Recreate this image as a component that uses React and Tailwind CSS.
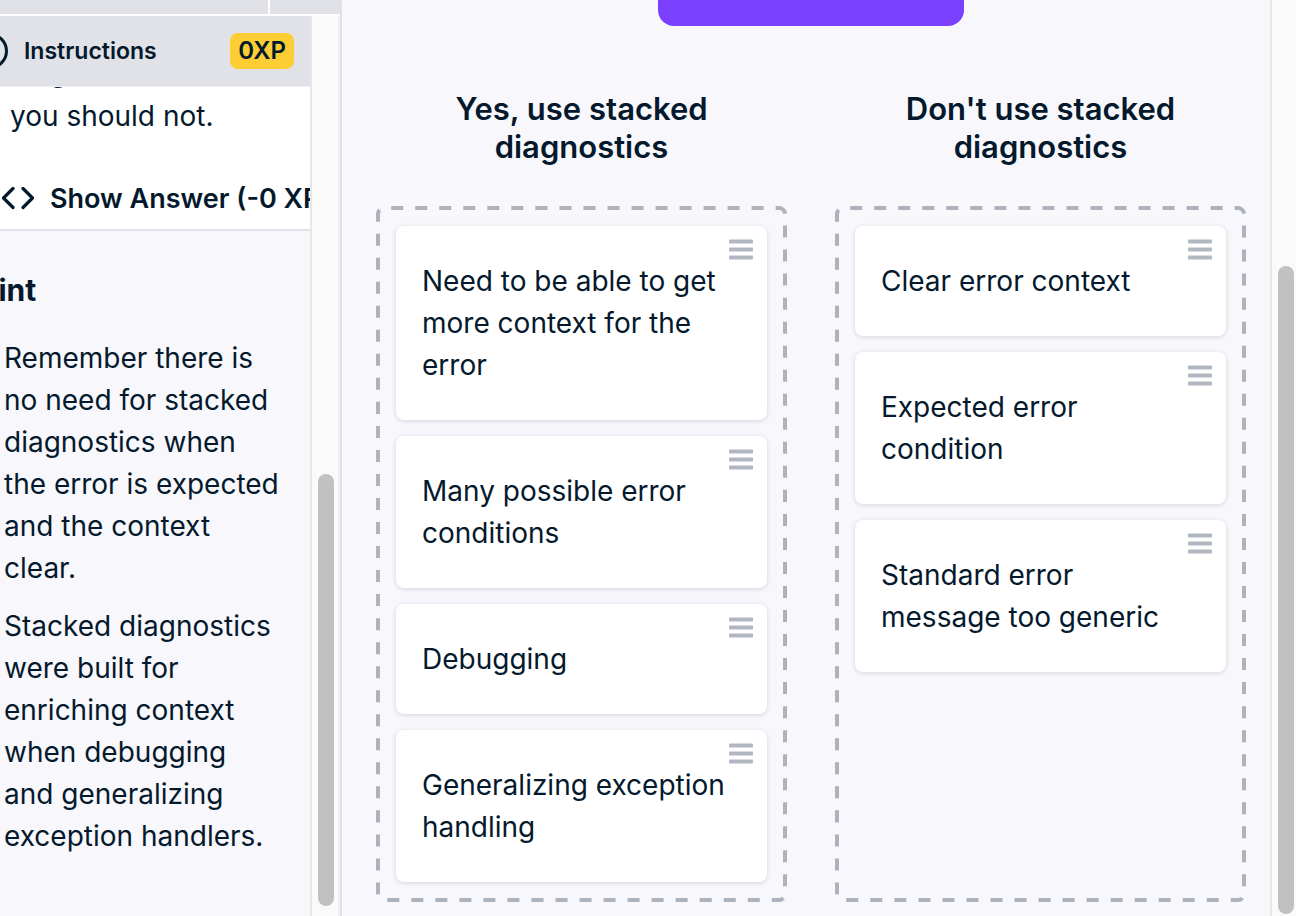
const useCards = [
  'Need to be able to get more context for the error',
  'Many possible error conditions',
  'Debugging',
  'Generalizing exception handling',
];

const avoidCards = [
  'Clear error context',
  'Expected error condition',
  'Standard error message too generic',
];

const hints = [
  'Remember there is no need for stacked diagnostics when the error is expected and the context clear.',
  'Stacked diagnostics were built for enriching context when debugging and generalizing exception handlers.',
];

function DragHandle() {
  return (
    <svg className="absolute right-3.5 top-3.5 h-5 w-6 overflow-visible" viewBox="0 0 24 20" fill="#b1b7c0" aria-hidden="true">
      <rect y="-0.5" width="24" height="4" rx="1" />
      <rect y="7.5" width="24" height="4" rx="1" />
      <rect y="15.5" width="24" height="4" rx="1" />
    </svg>
  );
}

function DashedOutline() {
  return (
    <svg className="pointer-events-none absolute inset-0 h-full w-full p-0.5 overflow-visible" aria-hidden="true">
      <rect
        width="100%"
        height="100%"
        rx="6"
        fill="none"
        stroke="#acb3bd"
        strokeWidth="4"
        pathLength="1820"
        strokeDasharray="10 10"
        strokeDashoffset="-6"
      />
    </svg>
  );
}

function DropColumn({ title, cards }) {
  return (
    <section className="flex min-w-0 flex-1 flex-col">
      <h2 className="mx-auto mb-10 max-w-72 text-center text-[31px] font-semibold leading-[38px]">{title}</h2>
      <div className="relative flex-1 p-5">
        <DashedOutline />
        <ul className="flex flex-col gap-4">
          {cards.map((card) => (
            <li
              key={card}
              className="relative rounded-lg bg-white px-[26px] py-[34px] text-[28px] leading-[42px] shadow-[0_1px_5px_rgba(5,25,45,0.15)]"
            >
              {card}
              <DragHandle />
            </li>
          ))}
        </ul>
      </div>
    </section>
  );
}

export default function App() {
  return (
    <div className="flex h-screen overflow-hidden bg-[#f7f7fc] font-[Inter,sans-serif] text-[#05192d]">
      <aside className="flex w-[342px] shrink-0 flex-col border-r-2 border-[#e1e2e7]">
        <div className="flex h-4 shrink-0 gap-0.5 border-b-2 border-white bg-white">
          <div className="w-[268px] bg-[#e1e2e7]" />
          <div className="flex-1 bg-[#e1e2e7]" />
        </div>
        <div className="flex min-h-0 flex-1">
          <div className="min-w-0 flex-1 overflow-hidden">
            <header className="flex h-[71px] items-center border-b border-[#eeeef2] bg-[#e1e2e7] pr-4">
              <svg className="h-9 w-2" viewBox="28 0 8 36" fill="none" aria-hidden="true">
                <circle cx="18" cy="18" r="16.5" stroke="#05192d" strokeWidth="3" />
              </svg>
              <h1 className="ml-4 text-[23px] font-semibold">Instructions</h1>
              <span className="ml-auto rounded-lg bg-[#fcce34] px-2 text-[24px] font-semibold leading-9">0XP</span>
            </header>
            <div className="border-b-2 border-[#e1e2e7] bg-white">
              <div className="flex h-2 items-end overflow-hidden pl-2.5 text-[28px] leading-[46px]" aria-hidden="true">
                diag
              </div>
              <p className="pl-2.5 text-[28px] leading-[42px]">you should not.</p>
              <button
                type="button"
                className="mt-8 flex h-[60px] items-center gap-4 whitespace-nowrap text-[27px] font-semibold"
              >
                <svg className="ml-0.5 h-6 w-8" viewBox="0 0 32 24" fill="none" stroke="#05192d" strokeWidth="3.2" strokeLinecap="round" strokeLinejoin="round" aria-hidden="true">
                  <path d="M11 1.5 1.5 11 11 20.5M21 1.5 30.5 11 21 20.5" />
                </svg>
                Show Answer (-0 XP)
              </button>
            </div>
            <h2 className="-ml-6 mt-[39px] text-[30px] font-bold leading-10">Hint</h2>
            <div className="mt-[27px] flex flex-col gap-4 pl-1 pr-7 text-[28px] leading-[42px]">
              {hints.map((hint) => (
                <p key={hint}>{hint}</p>
              ))}
            </div>
          </div>
          <div className="flex w-[30px] shrink-0 flex-col justify-end border-x-2 border-l-[#e7e7e7] border-r-[#f0f0f2] bg-[#fafafa] px-1.5 pb-2.5">
            <div className="h-[432px] w-4 rounded-full bg-[#c1c1c1]" />
          </div>
        </div>
      </aside>
      <main className="flex min-w-0 flex-1 flex-col pb-3.5 pl-[34px] pr-6">
        <button
          type="button"
          aria-label="Drag item"
          className="h-[26px] w-[306px] shrink-0 self-center rounded-b-2xl bg-[#7a3fff]"
        />
        <div className="mt-16 flex min-h-0 flex-1 gap-12">
          <DropColumn title="Yes, use stacked diagnostics" cards={useCards} />
          <DropColumn title="Don't use stacked diagnostics" cards={avoidCards} />
        </div>
      </main>
      <div className="flex w-[26px] shrink-0 flex-col justify-end border-l-2 border-[#e7e7e7] bg-[#fafafa] pb-0.5 pl-1.5">
        <div className="h-[648px] w-4 rounded-full bg-[#c1c1c1]" />
      </div>
    </div>
  );
}
